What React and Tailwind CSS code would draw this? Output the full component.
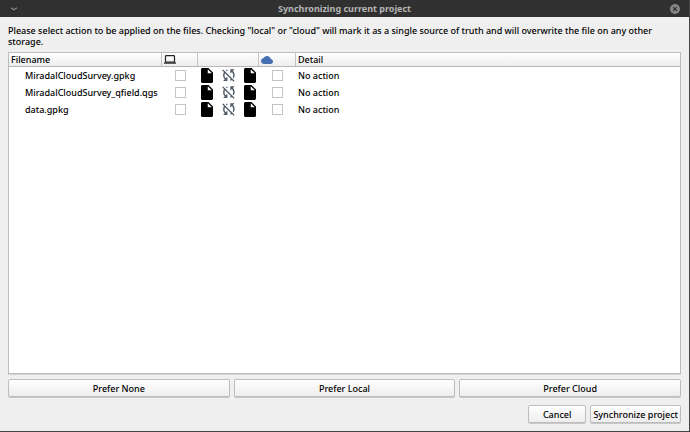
import React from "react";

const files = ["MiradalCloudSurvey.gpkg", "MiradalCloudSurvey_qfield.qgs", "data.gpkg"];

const buttonStyle =
    "h-[18px] rounded-[2px] border border-[#bdbdbd] bg-linear-to-b from-white to-[#ededed] text-center leading-none shadow-[0_1px_0_#c8c8c8]";

function FileIcon() {
    return (
        <svg viewBox="4 2 16 20" className="h-[15px] w-3 text-black" fill="currentColor" aria-hidden="true">
            <path d="M6 2c-1.1 0-2 .9-2 2v16c0 1.1.9 2 2 2h12c1.1 0 2-.9 2-2V8l-6-6H6zm7 7V3.5L18.5 9H13z" />
        </svg>
    );
}

function SyncDisabledIcon() {
    return (
        <svg viewBox="2.5 3.5 18 18" className="h-[13px] w-[13px] text-[#4f5b67]" fill="currentColor" aria-hidden="true">
            <path d="M10 6.35V4.26c-.8.21-1.55.54-2.23.96l1.46 1.46c.25-.12.5-.24.77-.33zm-7.14-.94l2.36 2.36C4.45 8.99 4 10.44 4 12c0 2.21.91 4.2 2.36 5.64L4 20h6v-6l-2.24 2.24C6.68 15.15 6 13.66 6 12c0-1 .25-1.94.68-2.77l8.08 8.08c-.25.13-.5.25-.77.34v2.09c.8-.21 1.55-.54 2.23-.96l2.36 2.36 1.27-1.27L4.14 4.14 2.86 5.41zM20 4h-6v6l2.24-2.24C17.32 8.85 18 10.34 18 12c0 1-.25 1.94-.68 2.77l1.46 1.46C19.55 15.01 20 13.56 20 12c0-2.21-.91-4.2-2.36-5.64L20 4z" />
        </svg>
    );
}

function LaptopIcon() {
    return (
        <svg viewBox="0 0 12 9" className="h-[9px] w-3 text-[#222]" fill="none" stroke="currentColor" role="img" aria-label="Local">
            <rect x="1.5" y=".6" width="9" height="6.400" rx=".8" strokeWidth="1.2" />
            <path d="M0 8h12" strokeWidth="1.4" />
        </svg>
    );
}

function CloudIcon() {
    return (
        <svg viewBox="0 4 24 16" className="h-2 w-3 text-[#456fb1]" fill="currentColor" role="img" aria-label="Cloud">
            <path d="M19.350 10.040C18.670 6.590 15.640 4 12 4 9.110 4 6.600 5.640 5.350 8.040 2.340 8.360 0 10.910 0 14c0 3.310 2.690 6 6 6h13c2.760 0 5-2.240 5-5 0-2.640-2.050-4.780-4.650-4.960z" />
        </svg>
    );
}

function CheckBox({ label }) {
    return (
        <input
            type="checkbox"
            aria-label={label}
            className="mx-auto block h-[11px] w-[11px] appearance-none border border-[#c3c3c3] bg-white checked:bg-[#456fb1]"
        />
    );
}

function TitleBar() {
    return (
        <header className="flex h-[17px] items-center justify-between bg-[#303030] px-[9px] text-[#b5b5b5]">
            <button type="button" aria-label="Window menu" className="flex w-[10px] justify-center">
                <svg viewBox="0 0 8 4" className="h-1 w-2" fill="none" stroke="#888" strokeWidth="1.2">
                    <path d="M1 .8l3 2 3-2" />
                </svg>
            </button>
            <h1 className="font-bold">Synchronizing current project</h1>
            <button type="button" aria-label="Close">
                <svg viewBox="0 0 10 10" className="h-[10px] w-[10px]">
                    <circle cx="5" cy="5" r="5" fill="#858585" />
                    <path d="M3.200 3.200l3.600 3.600M6.800 3.200l-3.600 3.600" stroke="#303030" strokeWidth="1.2" />
                </svg>
            </button>
        </header>
    );
}

function FileTable() {
    return (
        <div className="mt-[5px] flex-1 border border-[#bdbdbd] bg-white shadow-[0_1px_0_#d4d4d4]">
            <table className="w-full table-fixed border-separate border-spacing-0 text-left">
                <colgroup>
                    <col className="w-[153px]" />
                    <col className="w-9" />
                    <col className="w-[61px]" />
                    <col className="w-[37px]" />
                    <col />
                </colgroup>
                <thead>
                    <tr className="h-[14px] bg-linear-to-b from-white to-[#ececec] leading-[13px] *:border-[#c4c4c4] *:border-b *:border-b-[#b5b5b5] *:py-0 *:pr-0 *:pl-[2px] *:font-medium">
                        <th className="border-r">Filename</th>
                        <th className="border-r"><LaptopIcon /></th>
                        <th className="border-r" aria-label="Status"></th>
                        <th className="border-r"><CloudIcon /></th>
                        <th>Detail</th>
                    </tr>
                </thead>
                <tbody>
                    {files.map((name) => (
                        <tr key={name} className="h-[17px] leading-[14px] *:p-0">
                            <td className="whitespace-nowrap">
                                <span className="pl-4">{name}</span>
                            </td>
                            <td><CheckBox label={`Use local ${name}`} /></td>
                            <td>
                                <div className="flex items-center gap-[9px] pl-[3px]">
                                    <FileIcon />
                                    <SyncDisabledIcon />
                                    <FileIcon />
                                </div>
                            </td>
                            <td><CheckBox label={`Use cloud ${name}`} /></td>
                            <td><span className="pl-[2px]">No action</span></td>
                        </tr>
                    ))}
                </tbody>
            </table>
        </div>
    );
}

export default function App() {
    return (
        <div className="flex min-h-screen flex-col border-r border-b border-[#454545] bg-[#efefef] font-['Noto_Sans',sans-serif] text-[9px] leading-[11px] font-medium text-black">
            <TitleBar />
            <main className="flex flex-1 flex-col px-2 pt-2 pb-2">
                <p>
                    Please select action to be applied on the files. Checking "local" or "cloud" will mark it as a single source of truth and will overwrite the file on any other storage.
                </p>
                <FileTable />
                <div className="mt-[5px] grid grid-cols-3 gap-1">
                    <button type="button" className={buttonStyle}>Prefer None</button>
                    <button type="button" className={buttonStyle}>Prefer Local</button>
                    <button type="button" className={buttonStyle}>Prefer Cloud</button>
                </div>
                <div className="mt-2 flex justify-end gap-1">
                    <button type="button" className={`${buttonStyle} px-[14px]`}>Cancel</button>
                    <button type="button" className={`${buttonStyle} px-[2px]`}>Synchronize project</button>
                </div>
            </main>
        </div>
    );
}
